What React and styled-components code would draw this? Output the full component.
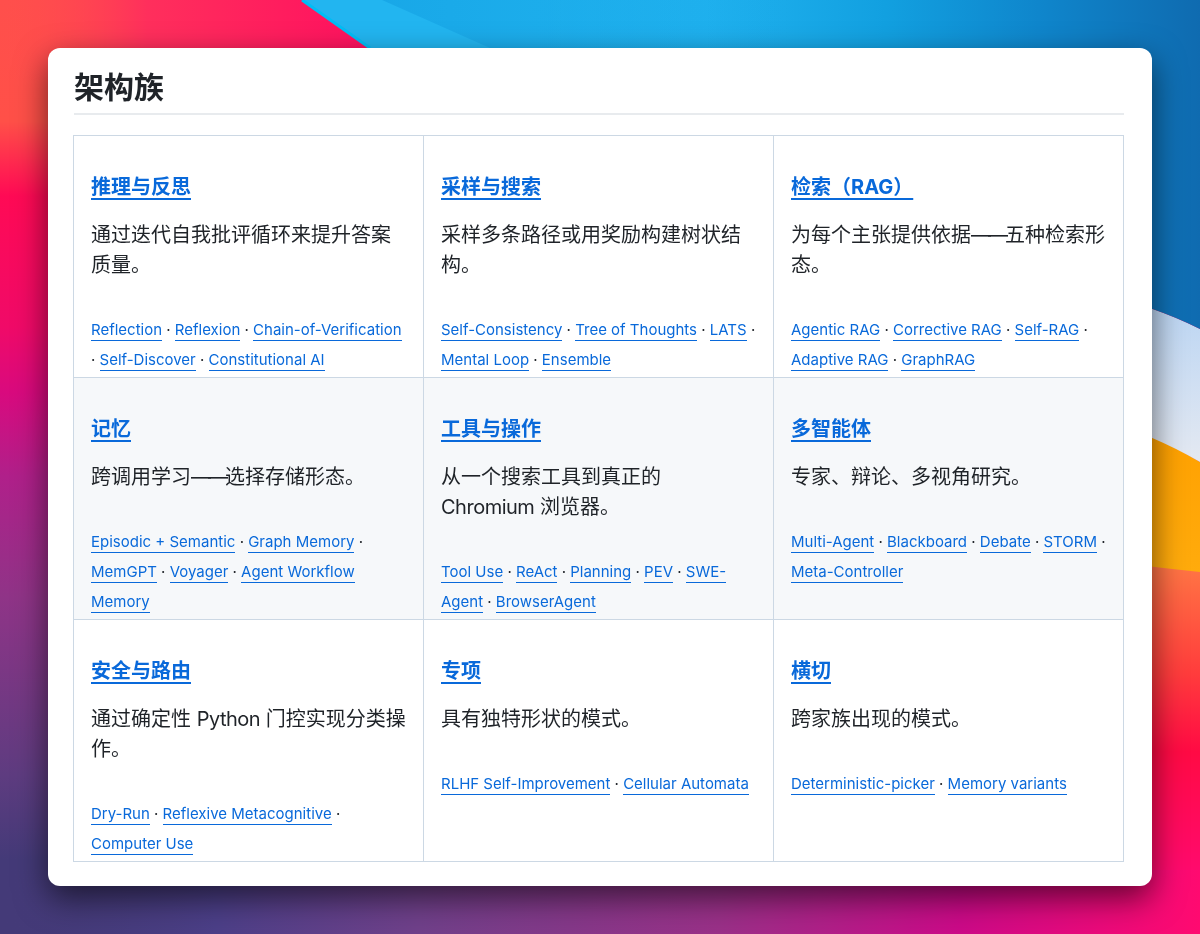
import React from 'react';
import styled, {createGlobalStyle} from 'styled-components';

const families = [
    {
        title: '推理与反思',
        text: '通过迭代自我批评循环来提升答案质量。',
        links: ['Reflection', 'Reflexion', 'Chain-of-Verification', 'Self-Discover', 'Constitutional AI'],
    },
    {
        title: '采样与搜索',
        text: '采样多条路径或用奖励构建树状结构。',
        links: ['Self-Consistency', 'Tree of Thoughts', 'LATS', 'Mental Loop', 'Ensemble'],
    },
    {
        title: '检索（RAG）',
        text: '为每个主张提供依据——五种检索形态。',
        links: ['Agentic RAG', 'Corrective RAG', 'Self-RAG', 'Adaptive RAG', 'GraphRAG'],
    },
    {
        title: '记忆',
        text: '跨调用学习——选择存储形态。',
        links: ['Episodic + Semantic', 'Graph Memory', 'MemGPT', 'Voyager', 'Agent Workflow Memory'],
    },
    {
        title: '工具与操作',
        text: '从一个搜索工具到真正的 Chromium 浏览器。',
        links: ['Tool Use', 'ReAct', 'Planning', 'PEV', 'SWE-Agent', 'BrowserAgent'],
    },
    {
        title: '多智能体',
        text: '专家、辩论、多视角研究。',
        links: ['Multi-Agent', 'Blackboard', 'Debate', 'STORM', 'Meta-Controller'],
    },
    {
        title: '安全与路由',
        text: '通过确定性 Python 门控实现分类操作。',
        links: ['Dry-Run', 'Reflexive Metacognitive', 'Computer Use'],
    },
    {
        title: '专项',
        text: '具有独特形状的模式。',
        links: ['RLHF Self-Improvement', 'Cellular Automata'],
    },
    {
        title: '横切',
        text: '跨家族出现的模式。',
        links: ['Deterministic-picker', 'Memory variants'],
    },
];

const Wallpaper = () => (
    <WallpaperSvg viewBox="0 0 1200 934" preserveAspectRatio="none">
        <defs>
            <linearGradient id="leftEdge" x1="0" y1="0" x2="0" y2="1">
                <stop offset="0" stopColor="#ff4f4c"/>
                <stop offset="0.13" stopColor="#ff5048"/>
                <stop offset="0.21" stopColor="#ff0a55"/>
                <stop offset="0.35" stopColor="#f00a68"/>
                <stop offset="0.42" stopColor="#d90a7e"/>
                <stop offset="0.51" stopColor="#b0208a"/>
                <stop offset="0.64" stopColor="#8f3487"/>
                <stop offset="0.83" stopColor="#5e3c80"/>
                <stop offset="0.92" stopColor="#443a78"/>
                <stop offset="1" stopColor="#443a78"/>
            </linearGradient>
            <linearGradient id="topEdge" x1="0" y1="0" x2="1" y2="0">
                <stop offset="0" stopColor="#ff4f4c" stopOpacity="0"/>
                <stop offset="0.35" stopColor="#ff2f5c"/>
                <stop offset="1" stopColor="#ff0a60"/>
            </linearGradient>
            <linearGradient id="bottomEdge" x1="0" y1="0" x2="1" y2="0">
                <stop offset="0" stopColor="#443a78" stopOpacity="0"/>
                <stop offset="0.18" stopColor="#4c3f88"/>
                <stop offset="0.35" stopColor="#70408a"/>
                <stop offset="0.6" stopColor="#9a3088"/>
                <stop offset="0.8" stopColor="#cc0a88"/>
                <stop offset="1" stopColor="#ff0a70"/>
            </linearGradient>
            <linearGradient id="sky" x1="0" y1="0" x2="1" y2="0">
                <stop offset="0.25" stopColor="#22b5f0"/>
                <stop offset="0.45" stopColor="#20b2ef"/>
                <stop offset="0.65" stopColor="#12a0e0"/>
                <stop offset="0.82" stopColor="#0f86cc"/>
                <stop offset="1" stopColor="#0f6bb0"/>
            </linearGradient>
            <linearGradient id="skyShade" x1="0" y1="0" x2="1" y2="0">
                <stop offset="0" stopColor="#129fe2" stopOpacity="0.6"/>
                <stop offset="0.5" stopColor="#129fe2" stopOpacity="0"/>
            </linearGradient>
            <linearGradient id="band" x1="0" y1="0" x2="0" y2="1">
                <stop offset="0" stopColor="#b9d4f3"/>
                <stop offset="1" stopColor="#e4e9f2"/>
            </linearGradient>
            <linearGradient id="orange" x1="0" y1="0" x2="0" y2="1">
                <stop offset="0" stopColor="#ffa000"/>
                <stop offset="1" stopColor="#ffab0c"/>
            </linearGradient>
            <linearGradient id="lower" x1="0" y1="0" x2="0" y2="1">
                <stop offset="0" stopColor="#ff7845"/>
                <stop offset="0.35" stopColor="#ff3d3c"/>
                <stop offset="0.6" stopColor="#ff0a44"/>
                <stop offset="1" stopColor="#ff0a70"/>
            </linearGradient>
        </defs>
        <rect width="1200" height="934" fill="url(#leftEdge)"/>
        <rect x="0" y="-40" width="420" height="120" fill="url(#topEdge)"/>
        <path d="M1100 560H1200V880H1100Z" fill="url(#lower)"/>
        <rect x="0" y="870" width="1200" height="64" fill="url(#bottomEdge)"/>
        <path d="M1100 420Q1152 432 1200 462V572Q1152 567 1100 560Z" fill="url(#orange)"/>
        <path d="M1100 295Q1152 305 1200 329V462Q1152 434 1100 420Z" fill="url(#band)"/>
        <path d="M302 0L370 48L640 260H1100V295Q1152 305 1200 329V0Z" fill="url(#sky)"/>
        <path d="M382 0L490 48H1200V0Z" fill="url(#skyShade)"/>
        <path d="M302 0L370 48" stroke="#00bdf5" strokeWidth="3" fill="none"/>
    </WallpaperSvg>
);

// the dash and latin runs are set a little tighter than the font gives them
const renderText = (text) => text.split(/(——|[A-Za-z]+)/).map((part, i) => {
    if (part === '——') return <Dash key={i}>{part}</Dash>;
    if (/^[A-Za-z]+$/.test(part)) return <Latin key={i}>{part}</Latin>;
    return part;
});

const App = () => {
    return (
        <Page>
            <GlobalStyle/>
            <Wallpaper/>
            <Card>
                <Title>架构族</Title>
                <Grid>
                    {families.map((item, index) => (
                        <Cell key={item.title} shaded={index >= 3 && index < 6}>
                            <CellTitle><CellTitleLink href="#">{item.title}</CellTitleLink></CellTitle>
                            <CellText>{renderText(item.text)}</CellText>
                            <Links>
                                {item.links.map((link, i) => (
                                    <React.Fragment key={link}>
                                        {i > 0 && ' · '}
                                        <PatternLink href="#">{link}</PatternLink>
                                    </React.Fragment>
                                ))}
                            </Links>
                        </Cell>
                    ))}
                </Grid>
            </Card>
        </Page>
    );
};

export default App;


const GlobalStyle = createGlobalStyle`
  html, body {
    margin: 0;
    padding: 0;
  }
  body {
    font-family: Inter, 'Noto Sans CJK SC', sans-serif;
    color: #1f2328;
    overflow: hidden;
  }
`

const Page = styled.div`
  box-sizing: border-box;
  width: 1200px;
  height: 934px;
  padding: 48px;
`

const WallpaperSvg = styled.svg`
  position: fixed;
  top: 0;
  left: 0;
  width: 1200px;
  height: 934px;
  z-index: -1;
`

const Card = styled.div`
  background: #fff;
  border-radius: 12px;
  padding: 21px 28px 24px 26px;
  box-sizing: border-box;
  box-shadow: 0 12px 32px rgba(0, 0, 0, 0.58);
`

const Title = styled.h1`
  margin: 0 0 20px;
  padding-bottom: 8px;
  border-bottom: 2px solid #e8ebee;
  font-size: 30px;
  line-height: 36px;
  font-weight: 700;
`

const Grid = styled.div`
  display: grid;
  grid-template-columns: repeat(3, 350px);
  margin-left: -1px;
  border-top: 1px solid #ccd8e4;
  border-left: 1px solid #ccd8e4;
`

const Cell = styled.div`
  box-sizing: border-box;
  padding: 36px 15px 2px 17px;
  border-right: 1px solid #ccd8e4;
  border-bottom: 1px solid #ccd8e4;
  background: ${props => props.shaded ? '#f6f8fa' : '#fff'};
`

const CellTitle = styled.h3`
  margin: 0 0 17px;
  font-size: 20px;
  line-height: 30px;
  font-weight: 700;
`

const CellTitleLink = styled.a`
  color: #0969da;
  text-decoration: underline 2px;
  text-underline-offset: 4px;
  text-decoration-skip-ink: none;
`

const CellText = styled.p`
  margin: 0 0 35px;
  padding-top: 1px;
  font-size: 20px;
  line-height: 30px;
`

const Dash = styled.span`
  letter-spacing: -3px;
`

const Latin = styled.span`
  letter-spacing: -0.5px;
`

const Links = styled.div`
  font-size: 15px;
  line-height: 30px;
`

const PatternLink = styled.a`
  color: #0969da;
  text-decoration: none;
  padding-bottom: 1px;
  border-bottom: 1px solid #0969da;
`
